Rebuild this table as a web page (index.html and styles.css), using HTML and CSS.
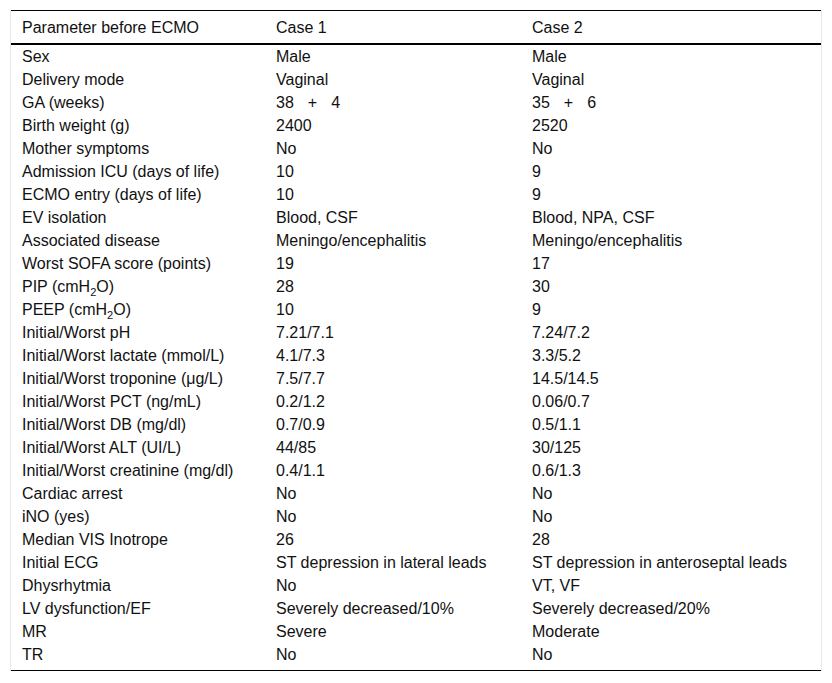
FILE: index.html
```html
<!DOCTYPE html>
<html>
<head>
<meta charset="utf-8">
<link rel="stylesheet" href="styles.css">
</head>
<body>
<div class="frame">
<table class="data">
<colgroup><col class="c1"><col class="c2"><col class="c3"></colgroup>
<thead>
<tr><th>Parameter before ECMO</th><th>Case 1</th><th>Case 2</th></tr>
</thead>
<tbody>
<tr><td>Sex</td><td>Male</td><td>Male</td></tr>
<tr><td>Delivery mode</td><td>Vaginal</td><td>Vaginal</td></tr>
<tr><td>GA (weeks)</td><td>38<span class="gap"></span>+<span class="gap"></span>4</td><td>35<span class="gap"></span>+<span class="gap"></span>6</td></tr>
<tr><td>Birth weight (g)</td><td>2400</td><td>2520</td></tr>
<tr><td>Mother symptoms</td><td>No</td><td>No</td></tr>
<tr><td>Admission ICU (days of life)</td><td>10</td><td>9</td></tr>
<tr><td>ECMO entry (days of life)</td><td>10</td><td>9</td></tr>
<tr><td>EV isolation</td><td>Blood, CSF</td><td>Blood, NPA, CSF</td></tr>
<tr><td>Associated disease</td><td>Meningo/encephalitis</td><td>Meningo/encephalitis</td></tr>
<tr><td>Worst SOFA score (points)</td><td>19</td><td>17</td></tr>
<tr><td>PIP (cmH<sub>2</sub>O)</td><td>28</td><td>30</td></tr>
<tr><td>PEEP (cmH<sub>2</sub>O)</td><td>10</td><td>9</td></tr>
<tr><td>Initial/Worst pH</td><td>7.21/7.1</td><td>7.24/7.2</td></tr>
<tr><td>Initial/Worst lactate (mmol/L)</td><td>4.1/7.3</td><td>3.3/5.2</td></tr>
<tr><td>Initial/Worst troponine (μg/L)</td><td>7.5/7.7</td><td>14.5/14.5</td></tr>
<tr><td>Initial/Worst PCT (ng/mL)</td><td>0.2/1.2</td><td>0.06/0.7</td></tr>
<tr><td>Initial/Worst DB (mg/dl)</td><td>0.7/0.9</td><td>0.5/1.1</td></tr>
<tr><td>Initial/Worst ALT (UI/L)</td><td>44/85</td><td>30/125</td></tr>
<tr><td>Initial/Worst creatinine (mg/dl)</td><td>0.4/1.1</td><td>0.6/1.3</td></tr>
<tr><td>Cardiac arrest</td><td>No</td><td>No</td></tr>
<tr><td>iNO (yes)</td><td>No</td><td>No</td></tr>
<tr><td>Median VIS Inotrope</td><td>26</td><td>28</td></tr>
<tr><td>Initial ECG</td><td>ST depression in lateral leads</td><td>ST depression in anteroseptal leads</td></tr>
<tr><td>Dhysrhytmia</td><td>No</td><td>VT, VF</td></tr>
<tr><td>LV dysfunction/EF</td><td>Severely decreased/10%</td><td>Severely decreased/20%</td></tr>
<tr><td>MR</td><td>Severe</td><td>Moderate</td></tr>
<tr><td>TR</td><td>No</td><td>No</td></tr>
</tbody>
</table>
</div>
</body>
</html>
```
FILE: styles.css
```css
html, body {
  margin: 0;
  padding: 0;
  background: #ffffff;
}
body {
  padding: 10px 10px 0 10px;
  font-family: "Liberation Sans", Arial, sans-serif;
  font-size: 16px;
  color: #111;
}
.frame {
  width: 810px;
  border-left: 1px solid #e6e6e6;
  border-right: 1px solid #e6e6e6;
}
.data {
  width: 810px;
  border-collapse: collapse;
  border-top: 1px solid #000;
  border-bottom: 1px solid #000;
}
.c1 { width: 254px; }
.c2 { width: 256px; }
.c3 { width: 300px; }
.data th {
  font-weight: normal;
  text-align: left;
  padding: 8px 0 6px 11px;
  height: 18px;
  line-height: 18px;
  vertical-align: top;
  border-bottom: 2px solid #000;
}
.data td {
  padding: 3px 0 2px 11px;
  height: 18px;
  line-height: 18px;
  vertical-align: top;
  white-space: nowrap;
}
.data tbody tr:first-child td {
  padding-top: 3px;
}
.data tbody tr:last-child td {
  padding-bottom: 6px;
}
.gap {
  display: inline-block;
  width: 14px;
}
.data sub {
  font-size: 11px;
  line-height: 0;
  vertical-align: -4px;
}
```
